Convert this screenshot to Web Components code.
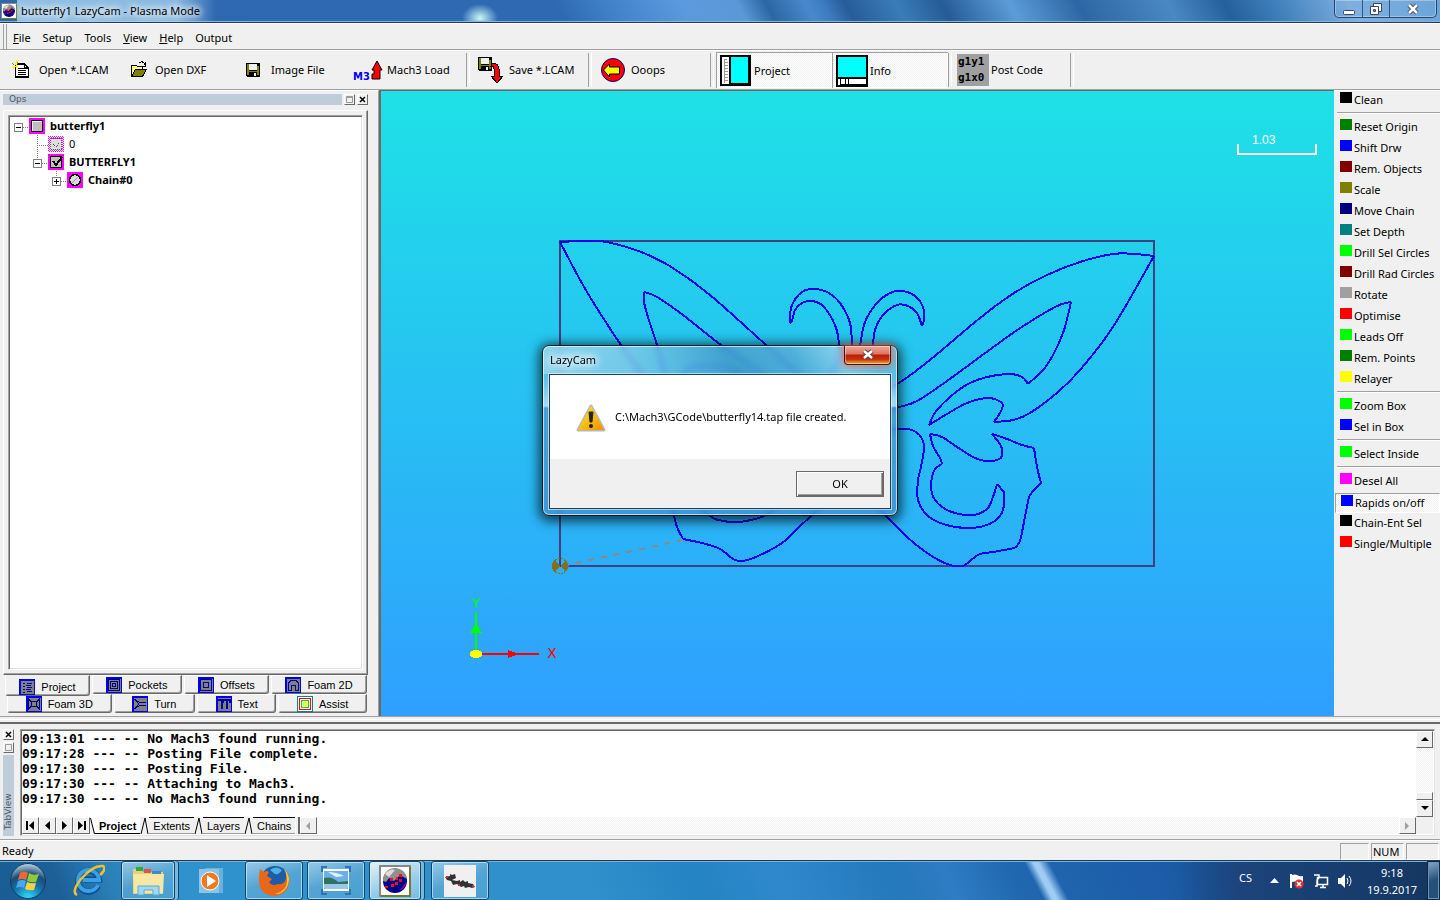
<!DOCTYPE html>
<html lang="en">
<head>
<meta charset="utf-8">
<title>butterfly1 LazyCam - Plasma Mode</title>
<style>
    :root {
        --face: #f0f0f0;
        --light: #ffffff;
        --soft: #e3e3e3;
        --shade: #a0a0a0;
        --dark: #696969;
        --dither: repeating-conic-gradient(#ffffff 0 25%, #f0f0f0 0 50%) 0 0 / 2px 2px;
        --ui-font: "Noto Sans", "Open Sans", sans-serif;
        --small-font: "Liberation Sans", Arial, sans-serif;
    }
    html, body {
        margin: 0;
        height: 100%;
    }
    body {
        font: 11px/16px var(--ui-font);
        color: #000;
        background: var(--face);
        overflow: hidden;
    }
</style>
</head>
<body>
<lazy-cam></lazy-cam>

<script>
const BASE = `
    * { box-sizing: border-box; }
    button {
        font: inherit;
        color: inherit;
        margin: 0;
        padding: 0;
        border: 0;
        background: none;
        text-align: left;
    }
    svg { display: block; flex: none; }
`;

/**
 * @param {HTMLElement} element
 * @param {string} css
 * @param {string} html
 */
function render(element, css, html) {
    element.attachShadow({ mode: "open" });
    element.shadowRoot.innerHTML = `<style>${BASE}${css}</style>${html}`;
}

const APP_ICON = `
    <rect width="32" height="32" fill="#fff"/>
    <path d="M0 0h32v2H2v30H0z" fill="#888"/>
    <path d="M30 2h2v30H2v-2h28z" fill="#7a7a20"/>
    <circle cx="16" cy="16" r="12" fill="#00008c"/>
    <path d="M4 16a12 12 0 0 1 24-2l-7-4-6 6-5-3-3 4z" fill="#909090"/>
    <path d="M6 9q5-6 10-4l-6 7z" fill="#ddd"/>
    <path d="M20 26q7-3 7-9l-4 6z" fill="#a000a0"/>
    <path d="M11 13h3v3h-3zM16 17h3v3h-3zM20 9h3v3h-3zM12 19h3v3h-3zM20 14h3v3h-3zM17 12h2v3h-2zM6 21h3v2H6z" fill="#f01010"/>`;

const ICONS = {
    open: `<svg width="32" height="32" shape-rendering="crispEdges">
        <path d="M15.500 10.500h9l4 4v9h-13z M24.500 10.500v4h4" transform="translate(-5 -.5)" fill="#fff" stroke="#000" stroke-width="1.500"/>
        <path d="M13 14h6M13 16h8M13 18h8M13 20h8" stroke="#000"/>
        <path d="M8 7l5 5M14 6l-4 5M7 12h6M11 6v8M8 15l2-3" stroke="#ff0" stroke-width="1"/>
        <path d="M7 9l2 2M13 8l-1 2" stroke="#777"/></svg>`,
    folder: `<svg width="32" height="32" shape-rendering="crispEdges">
        <path d="M10.500 22.500v-11h5l1 1h5v3" fill="#ff8" stroke="#000"/>
        <path d="M10.500 22.500l4-7h11l-4 7z" fill="#808000" stroke="#000"/>
        <path d="M18 9q4-3 6 2M24 8v4h-4" fill="none" stroke="#000"/></svg>`,
    floppy: `<svg width="32" height="32" shape-rendering="crispEdges">
        <path d="M9 9h14v14H10l-1-1z" fill="#000"/><path d="M10 10h2v11h-2zM20 12h2v9h-2zM10 17h12v1H10z" fill="#808000"/>
        <rect x="12" y="10" width="8" height="6" fill="#f0f0f0"/><rect x="17" y="19" width="2" height="3" fill="#f0f0f0"/></svg>`,
    mach: `<svg width="32" height="32">
        <text x="0" y="26" font-family="DejaVu Sans" font-weight="bold" font-size="10" fill="#0000f0">M3</text>
        <path d="M24 7l5 9h-2v9h-8v-5h2v-4h-2z" fill="#f00" stroke="#000"/></svg>`,
    save: `<svg width="32" height="32" shape-rendering="crispEdges">
        <path d="M3 3h14v14H4l-1-1z" fill="#000"/><path d="M4 4h2v11H4zM14 6h2v9h-2zM4 11h12v1H4z" fill="#808000"/>
        <rect x="6" y="4" width="8" height="6" fill="#f0f0f0"/><rect x="11" y="13" width="2" height="3" fill="#f0f0f0"/>
        <path d="M17 10q6-2 7 5v7h4l-6 7-6-7h3v-7q0-3-3-3z" fill="#f00" stroke="#000"/></svg>`,
    undo: `<svg width="32" height="32"><circle cx="16" cy="16" r="11.500" fill="#f00" stroke="#000080"/>
        <path d="M6.500 16l6-6v3h10v7h-10v3z" fill="#ff0" stroke="#000"/></svg>`,
    project: `<svg width="32" height="32" shape-rendering="crispEdges">
        <path d="M1 1h29v29H1z" fill="#fff" stroke="#000" stroke-width="2"/><path d="M10 1h19v28H10z" fill="#0ff" stroke="#000" stroke-width="2"/>
        <path d="M4.500 4v24M4 4.500h3M5 7.500h3M5 10.500h3M5 13.500h3M5 16.500h3M5 19.500h3M5 22.500h3M5 25.500h3" stroke="#999"/></svg>`,
    info: `<svg width="32" height="32" shape-rendering="crispEdges">
        <path d="M1 1h30v30H1z" fill="#fff" stroke="#000" stroke-width="2"/><path d="M1 1h30v22H1z" fill="#0ff" stroke="#000" stroke-width="2"/>
        <path d="M4.500 24v6M9.500 24v6M12.500 24v6M4 29.500h26" stroke="#000"/></svg>`,
    post: `<svg width="32" height="32"><rect width="32" height="32" fill="#a0a0a0"/>
        <text font-family="DejaVu Sans Mono" font-weight="bold" font-size="11"><tspan x="1" y="11">g1y1</tspan><tspan x="1" y="27">g1x0</tspan></text></svg>`
};

class ToolButton extends HTMLElement {
    constructor() {
        super();
        render(this, `
            :host { display: block; flex: none; width: 116px; }
            button {
                display: flex;
                align-items: center;
                gap: 2px;
                width: 100%;
                height: 100%;
                padding: 0 3px;
                border: 0 solid var(--shade);
                white-space: nowrap;
                font-size: 11px;
            }
            :host([pressed]) button {
                padding: 1px 3px 0;
                border-width: 1px 0 0 1px;
                box-shadow: inset -1px -1px var(--light);
                background: var(--dither);
            }`,
            `<button type="button">${ICONS[this.getAttribute("icon")]}<slot></slot></button>`);
    }
}

class MainTools extends HTMLElement {
    constructor() {
        super();
        render(this, `
            :host {
                display: flex;
                height: 40px;
                padding: 1px 0 1px 2px;
                border-top: 1px solid var(--light);
                border-bottom: 1px solid var(--shade);
                background: var(--face);
            }
            i { flex: none; width: 6px; padding: 1px 0; }
            i::before {
                content: "";
                display: block;
                height: 100%;
                width: 2px;
                border-left: 1px solid var(--shade);
                border-right: 1px solid var(--light);
            }`, `
            <tool-button icon="open">Open *.LCAM</tool-button>
            <tool-button icon="folder">Open DXF</tool-button>
            <tool-button icon="floppy">Image File</tool-button>
            <tool-button icon="mach">Mach3 Load</tool-button><i></i>
            <tool-button icon="save">Save *.LCAM</tool-button><i></i>
            <tool-button icon="undo">Ooops</tool-button><i></i>
            <tool-button icon="project" pressed>Project</tool-button>
            <tool-button icon="info" pressed>Info</tool-button><i></i>
            <tool-button icon="post">Post Code</tool-button><i></i>`);
    }
}

class TitleBar extends HTMLElement {
    constructor() {
        super();
        render(this, `
            :host {
                display: flex;
                align-items: flex-start;
                height: 23px;
                padding: 0 3px 0 1px;
                border-bottom: 1px solid #1c3c66;
                box-shadow: inset 0 -1px #8fb0d8;
                background:
                    radial-gradient(ellipse 18px 14px at 480px 18px, #c8f8f8, #a0e0f000),
                    linear-gradient(62deg, #2d68b0 0, #2f69b2 500px, #3f7fc6 540px, #5c9ade 610px, #5a98d8 660px, #2c66a4 685px,
                        #4a88cc 720px, #3c7cc0 735px, #265c9a 755px, #3a7cb8 800px, #255c98 840px, #5c9cd8 900px, #2d66a4 960px, #4a88c4 1040px, #24609c 1090px, #3c7cb8 1130px, #7db0e0 1200px, #6ca4d8 1280px);
            }
            svg { margin-top: 3px; }
            h1 {
                margin: 0;
                padding: 2px 16px 2px 4px;
                font-size: 11px;
                line-height: 18px;
                font-weight: normal;
                background: linear-gradient(to right, #a8d4f0d0, #a8d4f0c0 80%, #a0ccec00);
                text-shadow: 0 0 6px #fff, 0 0 9px #fff, 0 0 9px #fff;
            }
            div {
                display: flex;
                margin-left: auto;
                border: 1px solid #24466e;
                border-top: 0;
                border-radius: 0 0 5px 5px;
                box-shadow: inset 0 0 0 1px #ffffff50;
            }
            button { width: 27px; height: 17px; display: grid; place-items: center; }
            button + button { border-left: 1px solid #34567e; }
            button:last-child { width: 47px; }
            button svg { margin: 0; }`, `
            <svg width="16" height="16" viewBox="0 0 32 32">${APP_ICON}</svg>
            <h1>butterfly1 LazyCam - Plasma Mode</h1>
            <div>
                <button type="button" aria-label="Minimize"><svg width="12" height="12"><rect x=".5" y="7.500" width="11" height="4" rx="1" fill="#fff" stroke="#445"/></svg></button>
                <button type="button" aria-label="Restore"><svg width="12" height="12"><path d="M3.500.5h8v8h-8z" fill="#fff" stroke="#445"/><path d="M.5 3.500h8v8h-8z" fill="#fff" stroke="#445"/><path d="M3.500 6.500h2v2h-2z" fill="#69b" stroke="#445"/></svg></button>
                <button type="button" aria-label="Close"><svg width="12" height="12"><path d="M2 2l8 8M10 2l-8 8" stroke="#445" stroke-width="4.500"/><path d="M2 2l8 8M10 2l-8 8" stroke="#fff" stroke-width="2.500"/></svg></button>
            </div>`);
    }
}

class MenuBar extends HTMLElement {
    constructor() {
        super();
        render(this, `
            :host {
                display: flex;
                align-items: center;
                height: 27px;
                padding: 3px 0 0 3px;
                border-top: 1px solid var(--light);
                border-bottom: 1px solid var(--shade);
                background: var(--face);
            }
            i {
                align-self: stretch;
                width: 4px;
                margin: -3px 6px 0 0;
                border: 1px solid var(--shade);
                border-width: 0 1px;
            }
            nav { display: flex; gap: 12px; }`, `
            <i></i>
            <nav>
                <button type="button"><u>F</u>ile</button>
                <button type="button">Setup</button>
                <button type="button">Tools</button>
                <button type="button"><u>V</u>iew</button>
                <button type="button"><u>H</u>elp</button>
                <button type="button">Output</button>
            </nav>`);
    }
}

const CHECKS = {
    box: `<rect width="16" height="16" fill="#f0f"/><path d="M2.500 2.500h11v11h-11z" fill="#c0c0c0" stroke="#000"/><path d="M3 13V3h10" fill="none" stroke="#eee"/>`,
    dim: `<rect width="16" height="16" fill="url(#dots)"/><path d="M2.500 2.500h11v11h-11z" fill="#ddd" stroke="#555" stroke-dasharray="1 1"/><path d="M5 8l3 3 5-6" fill="none" stroke="#555" stroke-dasharray="1 1"/>`,
    tick: `<rect width="16" height="16" fill="#f0f"/><path d="M2.500 2.500h11v11h-11z" fill="#c0c0c0" stroke="#000"/><path d="M5 7l3 4 6-8" fill="none" stroke="#000" stroke-width="2"/>`,
    chain: `<rect width="16" height="16" fill="#f0f"/><circle cx="8" cy="8" r="5.500" fill="#ddd" stroke="#000" stroke-width="1.500"/><path d="M5 11l6-6" stroke="#999"/>`
};

class TreeRow extends HTMLElement {
    constructor() {
        super();
        const level = Number(this.getAttribute("level"));
        const toggle = this.getAttribute("toggle");
        const left = level * 19;
        let guide = "";
        if (level) {
            guide += `<path d="M${left + 4}.5 0v5" stroke="#808080" stroke-dasharray="1 1"/>`;
        }
        if (toggle) {
            guide += `<path d="M${left + 9} 10.500h6" stroke="#808080" stroke-dasharray="1 1"/>
                <path d="M${left}.5 6.500h8v8h-8z" fill="#fff" stroke="#808080"/>
                <path d="M${left + 2} 10.500h5${toggle === "plus" ? "m-2.500 -2.500v5" : ""}" stroke="#000"/>`;
        } else {
            guide += `<path d="M${left + 4}.5 0v18M${left + 4} 10.500h11" stroke="#808080" stroke-dasharray="1 1"/>`;
        }
        render(this, `
            :host { display: flex; align-items: center; height: 18px; line-height: 18px; }
            :host([bold]) { font-weight: bold; }
            .icon { margin-right: 5px; }`, `
            <svg width="${left + 15}" height="18" shape-rendering="crispEdges">${guide}</svg>
            <svg class="icon" width="16" height="16" shape-rendering="crispEdges">
                <defs><pattern id="dots" width="2" height="2" patternUnits="userSpaceOnUse"><path d="M0 0h1v1H0zM1 1h1v1H1z" fill="#f0f"/></pattern></defs>
                ${CHECKS[this.getAttribute("icon")]}
            </svg>
            <slot></slot>`);
    }
}

const BLUE = `<rect width="16" height="16" fill="#0000e8"/><rect x="2" y="2" width="13" height="13" fill="#808080"/>`;
const TAB_ICONS = {
    project: `${BLUE}<path d="M4 4.500h2M4 7.500h2M4 10.500h2M4 13.500h2M8 4.500h5M7 6.500h5M8 8.500h5M7 10.500h5M8 12.500h5" stroke="#0000a0"/>`,
    pockets: `${BLUE}<path d="M2.500 2.500h11v11h-11zM4.500 4.500h7v7h-7zM6.500 6.500h3v3h-3z" fill="none" stroke="#000080"/>`,
    offsets: `${BLUE}<path d="M2.500 2.500h11v11h-11zM5.500 5.500h5v5h-5z" fill="none" stroke="#0000a0"/>`,
    foam2d: `${BLUE}<path d="M3.500 13.500V6l3-3h4l3 3v7.500h-3V9q-2-2-4 0v4.500z" fill="none" stroke="#0000a0"/>`,
    foam3d: `${BLUE}<path d="M2 2.500l3 3h6l3-3M2 13.500l3-3h6l3 3M5.500 5v6M10.500 5v6M2.500 3v10M13.500 3v10" fill="none" stroke="#000080"/>`,
    turn: `${BLUE}<path d="M2 3.500l6 3h6M2 12.500l6-3h6M3 3l4 5-4 5" fill="none" stroke="#000080"/>`,
    text: `${BLUE}<path d="M2 4h7M5.500 4v9M7 7V4h7v3M10.500 4v9" fill="none" stroke="#0000a0" stroke-width="2"/>`,
    assist: `<rect width="16" height="16" fill="#088"/><rect x="1" y="1" width="14" height="14" fill="#fff"/><path d="M2.500 2.500h11v11h-11z" fill="none" stroke="#f00"/><path d="M4.500 4.500h7v7h-7z" fill="#fff" stroke="#0d0"/><rect x="6" y="6" width="4" height="4" fill="#ff0"/>`
};

class OpsTab extends HTMLElement {
    constructor() {
        super();
        render(this, `
            :host { display: block; flex: 1 1 auto; }
            button {
                display: flex;
                align-items: center;
                justify-content: center;
                gap: 6px;
                width: 100%;
                height: 19px;
                font: 11px/16px var(--small-font);
                border: 1px solid;
                border-color: var(--light) var(--dark) var(--dark) var(--light);
                border-radius: 0 0 3px 3px;
                box-shadow: inset -1px -1px var(--shade);
            }
            :host([active]) button {
                height: 21px;
                padding-top: 3px;
                border-top-color: var(--face);
                background: var(--face);
            }`,
            `<button type="button" role="tab"><svg width="16" height="16" shape-rendering="crispEdges">${TAB_ICONS[this.getAttribute("icon")]}</svg><slot></slot></button>`);
    }
}

class OpsPanel extends HTMLElement {
    constructor() {
        super();
        render(this, `
            :host {
                display: flex;
                flex-direction: column;
                flex: none;
                width: 379px;
                padding: 3px 10px 3px 3px;
                border-top: 1px solid var(--light);
                border-right: 1px solid var(--shade);
                background: var(--face);
            }
            header { display: flex; gap: 2px; align-items: center; height: 11px; }
            h2 {
                flex: 1;
                margin: 0;
                padding-left: 6px;
                font: 9px/11px "DejaVu Sans", sans-serif;
                color: #505860;
                background: #bfcddb;
            }
            header button {
                width: 11px;
                height: 11px;
                display: grid;
                place-items: center;
                border: 1px solid;
                border-color: var(--light) var(--dark) var(--dark) var(--light);
            }
            .frame {
                display: flex;
                flex: 1;
                margin-top: 5px;
                padding: 4px;
                border: 1px solid;
                border-color: var(--light) var(--dark) var(--dark) var(--light);
                box-shadow: inset -1px -1px var(--shade);
            }
            .tree {
                flex: 1;
                padding: 1px 0 0 5px;
                background: #fff;
                border: 1px solid;
                border-color: var(--shade) var(--light) var(--light) var(--shade);
                box-shadow: inset 1px 1px var(--dark), inset -1px -1px var(--soft);
            }
            .tabs { display: flex; gap: 2px; padding: 0 1px 0 2px; height: 19px; }
            .tabs ops-tab[active] { z-index: 1; }
            .tabs + .tabs { padding-left: 4px; }`, `
            <header>
                <h2>Ops</h2>
                <button type="button" aria-label="Expand"><svg width="7" height="7"><path d="M.5.5h6v6h-6zM0 1.500h6" fill="none" stroke="#999"/></svg></button>
                <button type="button" aria-label="Close"><svg width="7" height="7"><path d="M1 1l5 5M6 1l-5 5" stroke="#000" stroke-width="1.500"/></svg></button>
            </header>
            <div class="frame"><div class="tree">
                <tree-row level="0" toggle="minus" icon="box" bold>butterfly1</tree-row>
                <tree-row level="1" icon="dim">0</tree-row>
                <tree-row level="1" toggle="minus" icon="tick" bold>BUTTERFLY1</tree-row>
                <tree-row level="2" toggle="plus" icon="chain" bold>Chain#0</tree-row>
            </div></div>
            <div class="tabs" role="tablist">
                <ops-tab icon="project" active>Project</ops-tab>
                <ops-tab icon="pockets">Pockets</ops-tab>
                <ops-tab icon="offsets">Offsets</ops-tab>
                <ops-tab icon="foam2d">Foam 2D</ops-tab>
            </div>
            <div class="tabs" role="tablist">
                <ops-tab icon="foam3d">Foam 3D</ops-tab>
                <ops-tab icon="turn">Turn</ops-tab>
                <ops-tab icon="text">Text</ops-tab>
                <ops-tab icon="assist">Assist</ops-tab>
            </div>`);
    }
}

// Each inner list is one smooth run; runs meet at sharp corners.
const CHAINS = [
    [[766, 345], [710, 295], [673, 268], [646, 254], [623, 246], [600, 241], [580, 241], [560, 242]],
    [[560, 242], [587, 292], [621, 345], [650, 385]],
    [[766, 345], [800, 376]],
    [[665, 375], [657, 345], [648, 317], [644, 302], [644, 292]],
    [[644, 292], [657, 297], [683, 315], [721, 345], [768, 378]],
    [[680, 380], [690, 368], [710, 366], [735, 370], [760, 380]],
    [[829, 378], [838, 362], [839, 344], [835, 325], [823, 306], [812, 301], [802, 303], [795, 310], [792, 321], [790, 321], [792, 305], [802, 292], [813, 289], [827, 292], [840, 303], [850, 323], [852, 346]],
    [[860, 346], [865, 322], [877, 303], [890, 293], [902, 291], [915, 296], [923, 307], [924, 319], [922, 326]],
    [[922, 326], [917, 313], [908, 306], [897, 305], [883, 315], [875, 330], [873, 346]],
    [[880, 392], [899, 383], [930, 360], [980, 318], [1014, 293], [1047, 275], [1080, 262], [1113, 254], [1135, 254], [1154, 256]],
    [[1154, 256], [1113, 327], [1080, 370], [1058, 392], [1030, 413], [1013, 420], [994, 422]],
    [[994, 422], [1001, 411], [1002, 403], [988, 398], [967, 403], [947, 414], [929, 425]],
    [[929, 425], [937, 410], [960, 389], [980, 379], [1008, 374], [1022, 377], [1028, 384]],
    [[1028, 384], [1047, 365], [1063, 333], [1071, 302]],
    [[1071, 302], [1055, 307], [1013, 333], [947, 381], [917, 401], [899, 407], [880, 412]],
    [[880, 432], [899, 429], [912, 430], [921, 437], [924, 448], [921, 467], [918, 480], [918, 500], [927, 515], [943, 524], [966, 528], [987, 525], [1000, 516], [1004, 505], [1004, 492]],
    [[1004, 492], [997, 484]],
    [[997, 484], [993, 497], [988, 508], [978, 514], [965, 515], [947, 510], [935, 500], [931, 488], [932, 477], [935, 469], [942, 464]],
    [[942, 464], [940, 458], [933, 446], [930, 434]],
    [[930, 434], [942, 437], [957, 447], [973, 457], [985, 461], [997, 460], [1002, 456], [1001, 446], [992, 434]],
    [[992, 434], [1007, 439], [1022, 445], [1034, 448]],
    [[1034, 448], [1037, 467], [1041, 483]],
    [[1041, 483], [1030, 495], [1027, 507], [1023, 527], [1020, 541], [1015, 548]],
    [[1015, 548], [993, 552], [980, 554], [971, 560], [963, 566], [950, 565], [930, 555], [907, 537], [886, 516], [870, 498]],
    [[672, 500], [674, 515], [677, 527], [683, 539]],
    [[683, 539], [702, 543], [718, 548], [727, 554], [733, 559], [742, 561], [758, 556], [782, 543], [798, 528], [812, 515], [830, 498]],
    [[700, 508], [709, 515], [718, 520], [738, 522], [755, 519], [766, 515], [776, 508]]
];

/**
 * @param {number[][]} points
 * @returns {string} path data of a Catmull-Rom curve through the points
 */
function smoothPath(points) {
    let d = `M${points[0]}`;
    for (let i = 0; i < points.length - 1; i++) {
        const a = points[i - 1] || points[i];
        const b = points[i];
        const c = points[i + 1];
        const e = points[i + 2] || c;
        d += `C${b[0] + (c[0] - a[0]) / 6} ${b[1] + (c[1] - a[1]) / 6} ${c[0] - (e[0] - b[0]) / 6} ${c[1] - (e[1] - b[1]) / 6} ${c}`;
    }
    return d;
}

class DrawingView extends HTMLElement {
    constructor() {
        super();
        render(this, `
            :host {
                display: block;
                flex: 1;
                min-width: 0;
                min-height: 0;
                border-top: 1px solid var(--dark);
                border-left: 2px solid var(--dark);
                background: linear-gradient(#1ee1e6, #309fff);
            }
            svg { width: 100%; height: 100%; }
            text { font-family: "DejaVu Sans", sans-serif; }
            .scale { font-family: var(--small-font); }`, `
            <svg viewBox="381 91 953 625" role="img" aria-label="butterfly1 drawing">
                <g shape-rendering="crispEdges" fill="none" stroke-width="2">
                    <path d="M560 241h594v325H560z" stroke="#404080"/>
                    <path d="${CHAINS.map(smoothPath).join("")}" stroke="#0000f0"/>
                    <path d="M683 540L563 566" stroke="#888" stroke-dasharray="6 7"/>
                    <path d="M1238 144v10h78v-10" stroke="#fff"/>
                </g>
                <g shape-rendering="crispEdges">
                    <circle cx="560" cy="566" r="7.500" fill="none" stroke="#807020" stroke-dasharray="2 1"/>
                    <path d="M560 566l-6-6q-4 6 0 12zM560 566l6-6q4 6 0 12z" fill="#807020"/>
                    <path d="M476 653v-41" stroke="#0f0" stroke-width="2"/><path d="M476 623l6 10h-12z" fill="#0f0"/>
                    <path d="M476 654h63" stroke="#f00" stroke-width="2"/><path d="M508 650l11 4-11 4z" fill="#f00"/>
                    <ellipse cx="476" cy="654" rx="6" ry="4" fill="#ff0"/>
                </g>
                <text x="476" y="608" text-anchor="middle" font-size="14" fill="#0f0">Y</text>
                <text x="552" y="658" text-anchor="middle" font-size="14" fill="#f00">X</text>
                <text class="scale" x="1252" y="144" font-size="12" fill="#fff">1.03</text>
            </svg>`);
    }
}

class OpItem extends HTMLElement {
    constructor() {
        super();
        render(this, `
            :host { display: block; }
            button {
                display: flex;
                gap: 2px;
                width: 100%;
                height: 21px;
                padding: 1px 0 0 5px;
                white-space: nowrap;
            }
            i { width: 12px; height: 11px; background: ${this.getAttribute("color")}; }
            :host([pressed]) button {
                height: 20px;
                margin-bottom: 1px;
                border: 1px solid;
                border-color: var(--shade) var(--light) var(--light) var(--shade);
                background: var(--dither);
            }`,
            `<button type="button"><i></i><slot></slot></button>`);
    }
}

class OpsBar extends HTMLElement {
    constructor() {
        super();
        const groups = [
            [["#000", "Clean"]],
            [["#008000", "Reset Origin"], ["#00f", "Shift Drw"], ["#800000", "Rem. Objects"], ["#808000", "Scale"],
                ["#000080", "Move Chain"], ["#008080", "Set Depth"], ["#0f0", "Drill Sel Circles"], ["#800000", "Drill Rad Circles"],
                ["#a0a0a0", "Rotate"], ["#f00", "Optimise"], ["#0f0", "Leads Off"], ["#008000", "Rem. Points"], ["#ff0", "Relayer"]],
            [["#0f0", "Zoom Box"], ["#00f", "Sel in Box"]],
            [["#0f0", "Select Inside"]],
            [["#f0f", "Desel All"], ["#00f", "Rapids on/off", "pressed"], ["#000", "Chain-Ent Sel"], ["#f00", "Single/Multiple"]]
        ];
        const html = groups.map((group) => group.map(([color, label, state]) =>
            `<op-item color="${color}" ${state || ""}>${label}</op-item>`).join("")).join("<hr>");
        render(this, `
            :host {
                display: block;
                flex: none;
                width: 106px;
                padding: 0 0 0 1px;
                border-top: 1px solid var(--light);
                background: var(--face);
            }
            hr {
                height: 2px;
                margin: 0 0 4px 2px;
                border: 0;
                border-top: 1px solid var(--shade);
                border-bottom: 1px solid var(--light);
            }`, html);
    }
}

class LogPanel extends HTMLElement {
    constructor() {
        super();
        const lines = [
            "09:13:01 --- -- No Mach3 found running.",
            "09:17:28 --- -- Posting File complete.",
            "09:17:30 --- -- Posting File.",
            "09:17:30 --- -- Attaching to Mach3.",
            "09:17:30 --- -- No Mach3 found running."
        ];
        const slash = `<svg width="9" height="17"><path d="M0 17L4 1H8L9 17z" fill="#f0f0f0"/><path d="M1 17L5 1M5 1l3 16" fill="none" stroke="#000"/></svg>`;
        render(this, `
            :host {
                display: flex;
                flex: none;
                gap: 6px;
                height: 118px;
                padding: 5px 5px 3px 3px;
                border-top: 2px solid var(--dark);
                border-bottom: 1px solid var(--shade);
                background: var(--face);
            }
            .grip { display: flex; flex-direction: column; gap: 2px; width: 11px; }
            .grip button { height: 11px; }
            button {
                display: grid;
                place-items: center;
                border: 1px solid;
                border-color: var(--light) var(--dark) var(--dark) var(--light);
                background: var(--face);
            }
            .grip span {
                flex: 1;
                writing-mode: vertical-rl;
                transform: rotate(180deg);
                padding-top: 6px;
                font: 9px/11px "DejaVu Sans", sans-serif;
                color: #505860;
                background: #bfcddb;
            }
            .box {
                flex: 1;
                min-width: 0;
                display: grid;
                grid-template: 1fr 17px / 1fr 17px;
                padding: 1px;
                background: #fff;
                border: 1px solid;
                border-color: var(--shade) var(--soft) var(--soft) var(--shade);
                box-shadow: inset 1px 1px var(--dark);
            }
            ol {
                margin: 0;
                padding: 0;
                list-style: none;
                font: bold 13px/15px "DejaVu Sans Mono", monospace;
                white-space: pre;
                overflow: hidden;
            }
            .scroll { display: flex; flex-direction: column; background: var(--dither); }
            .scroll button { height: 17px; }
            .scroll .thumb { height: 8px; margin-top: auto; }
            .bottom { display: flex; background: var(--dither); font: 11px/16px var(--small-font); }
            .bottom > button { flex: none; width: 17px; }
            .tabs { display: flex; flex: none; background: var(--face); }
            .tabs button {
                padding: 0 4px;
                border-width: 1px 0;
                border-color: #000 transparent var(--shade);
            }
            .tabs .active { font-weight: bold; background: #fff; border-color: #fff transparent #000; }
            .split { width: 5px; border-left: 1px solid var(--light); border-right: 2px solid var(--dark); background: var(--face); }
            .end { margin-left: auto; }
            .corner { background: var(--face); }`, `
            <div class="grip">
                <button type="button" aria-label="Close"><svg width="7" height="7"><path d="M1 1l5 5M6 1l-5 5" stroke="#000" stroke-width="1.500"/></svg></button>
                <button type="button" aria-label="Expand"><svg width="7" height="7"><path d="M.5.5h6v6h-6z" fill="none" stroke="#999"/></svg></button>
                <span>TabView</span>
            </div>
            <div class="box">
                <ol>${lines.map((line) => `<li>${line}</li>`).join("")}</ol>
                <div class="scroll">
                    <button type="button" aria-label="Up"><svg width="8" height="5"><path d="M4 0l4 4H0z"/></svg></button>
                    <button type="button" class="thumb" aria-label="Scroll"></button>
                    <button type="button" aria-label="Down"><svg width="8" height="5"><path d="M0 0h8L4 4z"/></svg></button>
                </div>
                <div class="bottom">
                    <button type="button" aria-label="First"><svg width="9" height="9"><path d="M0 0h2v9H0zM8 0v9L3 4.500z"/></svg></button>
                    <button type="button" aria-label="Previous"><svg width="9" height="9"><path d="M7 0v9L2 4.500z"/></svg></button>
                    <button type="button" aria-label="Next"><svg width="9" height="9"><path d="M2 0v9l5-4.500z"/></svg></button>
                    <button type="button" aria-label="Last"><svg width="9" height="9"><path d="M7 0h2v9H7zM1 0v9l5-4.500z"/></svg></button>
                    <div class="tabs">
                        <svg width="5" height="17"><path d="M0 0h5v17z" fill="#fff"/><path d="M.5 1l4 16" stroke="#000"/></svg>
                        <button type="button" class="active">Project</button>${slash}
                        <button type="button">Extents</button>${slash}
                        <button type="button">Layers</button>${slash}
                        <button type="button">Chains</button>
                    </div>
                    <div class="split"></div>
                    <button type="button" aria-label="Left"><svg width="5" height="8"><path d="M4 0v8L0 4z" fill="#a0a0a0"/></svg></button>
                    <button type="button" class="end" aria-label="Right"><svg width="5" height="8"><path d="M0 0v8l4-4z" fill="#a0a0a0"/></svg></button>
                </div>
                <div class="corner"></div>
            </div>`);
    }
}

class StatusBar extends HTMLElement {
    constructor() {
        super();
        render(this, `
            :host {
                display: flex;
                flex: none;
                align-items: center;
                gap: 2px;
                height: 20px;
                padding: 1px 1px 0 2px;
                border-top: 1px solid var(--light);
                background: var(--face);
            }
            span { margin-right: auto; }
            b {
                width: 33px;
                height: 17px;
                padding: 0 1px;
                font-weight: normal;
                border: 1px solid;
                border-color: var(--shade) var(--light) var(--light) var(--shade);
            }
            b:first-of-type { width: 29px; }`,
            `<span>Ready</span><b></b><b>NUM</b><b></b>`);
    }
}

const TASK_ICONS = {
    ie: `<svg width="34" height="34"><path d="M27 22A10.500 10.500 0 1 1 28 15.500H12" fill="none" stroke="#0c4c94" stroke-width="6"/><path d="M27 21A10.500 10.500 0 1 1 28 16H12" fill="none" stroke="#38a0e4" stroke-width="4"/>
        <path d="M6 31q-6-3 4-16Q22 1 32 2q4 3-3 9" fill="none" stroke="#f0c030" stroke-width="2.500"/></svg>`,
    explorer: `<svg width="34" height="34"><path d="M2 5h8l2 3h20v22H2z" fill="#e8cf78"/><path d="M5 3h7v4H5z" fill="#3a3"/><path d="M13 5h7v4h-7z" fill="#d54"/><path d="M21 7h9v4h-9z" fill="#48c"/><path d="M2 10h31l-1 19H3z" fill="#f6e8a4"/>
        <path d="M7 31v-9h21v9h-6v-5h-9v5z" fill="#9ed8f4" stroke="#5ba8d4"/></svg>`,
    media: `<svg width="34" height="34"><path d="M10 4h18v25H10z" fill="#6ab0dc"/><path d="M4 5h20v24H4z" fill="#8cc4e8"/><circle cx="15" cy="17" r="9" fill="#f07820" stroke="#fff"/><path d="M12 11l9 6-9 6z" fill="#fff"/></svg>`,
    firefox: `<svg width="34" height="34"><circle cx="18" cy="16" r="14" fill="#1c5ca8"/><path d="M13 6q6-5 12 0-3 5-7 4z" fill="#4cb4e4"/>
        <path d="M3 5l4 3q3-2 5 0l-2 4 5 3-3 3q3 5 9 2 7 1 8-6 1-6-3-9 7 4 6 14-2 12-15 13Q3 31 2 18 2 9 3 5z" fill="#e86818"/><path d="M27 5q8 8 3 18-5 8-12 7 12-3 12-13 0-7-3-12z" fill="#ffc830"/></svg>`,
    photo: `<svg width="34" height="34"><path d="M4 5h26v22H4z" fill="#fff"/><path d="M5 7h24v18H5z" fill="#6cb0e8"/><path d="M9 8q8 0 16 4l-8 1z" fill="#e0f0fc"/><path d="M5 14q8-2 14 4l10-1v4H5z" fill="#2c7460"/><path d="M5 20h24v5H5z" fill="#98c8e4"/>
        <path d="M3 8V3h5M26 3h5v5M31 25v5h-5M8 30H3v-5" fill="none" stroke="#2c74b8" stroke-width="2"/></svg>`,
    lazycam: `<svg width="32" height="32">${APP_ICON}</svg>`,
    sleigh: `<svg width="32" height="32"><path d="M0 0h32v32H0z" fill="#f0f0f0"/><path d="M1 12l5-1v-2l2 1 3-1 1 4-4 2 5 1 3-1v2l3-2 2 2 3-1v2l5 1 2 3-3 1-3-1-4 1-1-2-3 1-4-3-4 1-2-4-4-1z" fill="#333"/><path d="M2 11h2v2H2zM14 19h2v2h-2zM28 20h2v2h-2z" fill="#e22"/></svg>`
};

class TaskItem extends HTMLElement {
    constructor() {
        super();
        render(this, `
            :host { display: block; flex: none; width: 58px; }
            button {
                display: grid;
                place-items: center;
                width: 100%;
                height: 39px;
                border: 1px solid transparent;
                border-radius: 3px;
            }
            :host([running]) button, :host([stacked]) button {
                border-color: #14456a;
                background: linear-gradient(160deg, #b8dcf0c0, #68b0d8a0 50%, #58acd890);
                box-shadow: inset 0 0 0 1px #d8f0ffa0;
            }
            :host([stacked]) button {
                width: 54px;
                box-shadow: inset 0 0 0 1px #d8f0ffa0, 3px 0 #78b8dc, 4px 0 #14456a;
            }
            :host([active]) button {
                width: 52px;
                background: linear-gradient(160deg, #f0f8fcf0, #b8e0f4c0 60%, #90d0f0b0);
            }`,
            `<button type="button" aria-label="${this.getAttribute("icon")}">${TASK_ICONS[this.getAttribute("icon")]}</button>`);
    }
}

class TaskBar extends HTMLElement {
    constructor() {
        super();
        render(this, `
            :host {
                display: flex;
                flex: none;
                align-items: center;
                height: 40px;
                color: #fff;
                border-top: 1px solid #1c3c58;
                box-shadow: inset 0 1px #78b0d8;
                background:
                    linear-gradient(to left, #143660 0, #1c447c 200px, #1c447c00 260px),
                    linear-gradient(62deg, transparent 922px, #a0ccf4 930px, #a0ccf4 934px, transparent 944px),
                    linear-gradient(70deg, #1a5c94 0, #1d6098 60px, #2a80b8 110px, #3092cc 170px, #2f90cc 560px, #2484c4 660px, #3088cc 740px, #2478bc 850px, #2f7cc4 900px, #2068b0 960px, #1c5ca8 1100px, #184c8c 1200px, #143c70 1340px);
            }
            .start { width: 55px; height: 39px; display: grid; place-items: center; }
            .apps { display: flex; gap: 4px; padding-left: 4px; }
            .tray { display: flex; align-items: center; gap: 8px; height: 100%; margin-left: auto; }
            .tray span { padding-right: 10px; margin-bottom: 5px; }
            time { text-align: center; line-height: 17px; padding: 0 2px 0 6px; }
            .desk { width: 13px; height: 39px; border: 1px solid #0c2848; background: linear-gradient(160deg, #88a8c8, #24507c 50%); box-shadow: inset 0 0 0 1px #6c90b4; }`, `
            <button type="button" class="start" aria-label="Start"><svg width="38" height="38">
                <defs><radialGradient id="orb" cx=".5" cy="1" r="1"><stop offset="0" stop-color="#30e0ff"/><stop offset=".45" stop-color="#1470a8"/><stop offset=".7" stop-color="#1c4c74"/><stop offset="1" stop-color="#c0d8e8"/></radialGradient></defs>
                <circle cx="19" cy="19" r="17.500" fill="url(#orb)" stroke="#123c5c"/>
                <path d="M11 11q4-3 8 0l-2 7q-4-2-8 0z" fill="#f06830"/><path d="M20 11q4 3 10 1l-3 8q-4 1-9-1z" fill="#90c840"/>
                <path d="M9 19q4-2 8 0l-2 7q-4-2-8 0z" fill="#48a8f0"/><path d="M18 20q4 2 9 1l-2 7q-5 1-9-1z" fill="#ffd040"/></svg></button>
            <div class="apps">
                <task-item icon="ie"></task-item>
                <task-item icon="explorer" stacked></task-item>
                <task-item icon="media"></task-item>
                <task-item icon="firefox" running></task-item>
                <task-item icon="photo" running></task-item>
                <task-item icon="lazycam" stacked active></task-item>
                <task-item icon="sleigh" running></task-item>
            </div>
            <div class="tray">
                <span>CS</span>
                <svg width="9" height="5"><path d="M4.500 0L9 5H0z" fill="#fff"/></svg>
                <svg width="18" height="16"><path d="M4 1v14" stroke="#fff" stroke-width="2"/><path d="M5 2q3-1 5 0 3 2 6 1v7q-3 1-6-1-2-1-5 0z" fill="#fff"/><circle cx="12" cy="11" r="4.500" fill="#e03030"/><path d="M10 9l4 4M14 9l-4 4" stroke="#fff" stroke-width="1.500"/></svg>
                <svg width="16" height="16"><path d="M4.500 4.500h10v7h-10zM7 14.500h6M10 12v2M1 2h5v3l-2 2v6H2" fill="none" stroke="#fff" stroke-width="1.500"/></svg>
                <svg width="16" height="16"><path d="M1 5h3l4-4v14l-4-4H1z" fill="#fff"/><path d="M10 5q2 3 0 6M12 3q4 5 0 10" fill="none" stroke="#fff"/></svg>
                <time>9:18<br>19.9.2017</time>
                <button type="button" class="desk" aria-label="Show desktop"></button>
            </div>`);
    }
}

class MessageBox extends HTMLElement {
    constructor() {
        super();
        render(this, `
            :host {
                display: flex;
                flex-direction: column;
                width: 356px;
                padding: 0 6px 6px;
                border: 1px solid #10202c;
                border-radius: 7px;
                box-shadow: inset 0 0 0 1px #ffffffa0, 0 2px 12px 3px #000000b0;
                background:
                    linear-gradient(62deg, #ffffff50 0, #ffffff20 80px, #2070a000 110px, #1878b070 170px, #1878b040 230px, #ffffff30 270px, #ffffff00 300px) 0 0 / 100% 28px no-repeat,
                    linear-gradient(#80c4e0b0 0, #70bce0b0 30px, #d0e8f4c0 60px, #5098ccb0 62px, #4490ccc0);
                backdrop-filter: blur(3px);
            }
            header { display: flex; align-items: flex-start; justify-content: space-between; height: 28px; }
            h2 {
                margin: 5px 0 0 1px;
                font-size: 11px;
                line-height: 18px;
                font-weight: normal;
                text-shadow: 0 0 6px #fff, 0 0 8px #fff, 0 0 10px #fff, 0 0 12px #fff;
            }
            header button {
                display: grid;
                place-items: center;
                width: 47px;
                height: 19px;
                border: 1px solid #401818;
                border-top: 0;
                border-radius: 0 0 4px 4px;
                background: linear-gradient(#f0a898, #e07060 45%, #b81c08 50%, #c83408 75%, #f0b040);
                box-shadow: inset 0 0 0 1px #ffffff60, 0 0 6px 2px #ff6040b0;
            }
            section { border: 1px solid #204058; background: #fff; box-shadow: 0 0 0 1px #ffffff90; }
            p { display: flex; align-items: center; gap: 8px; margin: 0; padding: 0 25px; height: 84px; }
            footer { display: flex; justify-content: flex-end; padding: 12px 6px 11px; background: var(--face); }
            footer button {
                width: 88px;
                height: 26px;
                text-align: center;
                border: 1px solid var(--dark);
                box-shadow: inset 1px 1px var(--light), inset -1px -1px var(--dark), inset -2px -2px var(--shade);
                background: var(--face);
            }`, `
            <header>
                <h2>LazyCam</h2>
                <button type="button" aria-label="Close"><svg width="12" height="11"><path d="M2 2l8 7M10 2l-8 7" stroke="#544" stroke-width="4.500"/><path d="M2 2l8 7M10 2l-8 7" stroke="#fff" stroke-width="2.500"/></svg></button>
            </header>
            <section>
                <p>
                    <svg width="32" height="30"><defs><linearGradient id="warn" x2="1" y2="1"><stop stop-color="#fff020"/><stop offset="1" stop-color="#f09000"/></linearGradient></defs>
                        <path d="M16 4L29 28H3z" fill="url(#warn)" stroke="#b8b8b8" stroke-width="3" stroke-linejoin="round"/>
                        <path d="M16 4L29 28H3z" fill="url(#warn)"/>
                        <path d="M14 10h4l-1 10h-2z" fill="#222" stroke="#222"/><circle cx="16" cy="24" r="2" fill="#222"/></svg>
                    <slot></slot>
                </p>
                <footer><button type="button" class="ok">OK</button></footer>
            </section>`);
        this.shadowRoot.querySelectorAll("button").forEach((button) => {
            button.addEventListener("click", () => this.remove());
        });
    }
}

class LazyCam extends HTMLElement {
    constructor() {
        super();
        render(this, `
            :host { display: flex; flex-direction: column; height: 100vh; }
            title-bar, menu-bar, main-tools { flex: none; }
            main { display: flex; flex: 1; min-height: 0; }
            .splitter {
                flex: none;
                height: 6px;
                border-top: 1px solid var(--shade);
                background: linear-gradient(var(--face) 2px, #fff 2px 3px, var(--face) 3px);
            }
            .modal {
                position: absolute;
                inset: 0 0 40px;
                display: grid;
                place-items: center;
            }`, `
            <title-bar></title-bar>
            <menu-bar></menu-bar>
            <main-tools></main-tools>
            <main>
                <ops-panel></ops-panel>
                <drawing-view></drawing-view>
                <ops-bar></ops-bar>
            </main>
            <div class="splitter"></div>
            <log-panel></log-panel>
            <status-bar></status-bar>
            <task-bar></task-bar>
            <div class="modal"><message-box role="dialog" aria-label="LazyCam">C:\\Mach3\\GCode\\butterfly14.tap file created.</message-box></div>`);
    }
}

// Attributes are read in the constructors, so children are defined after
// the markup of their parent exists: the page root goes first.
customElements.define("lazy-cam", LazyCam);
customElements.define("title-bar", TitleBar);
customElements.define("menu-bar", MenuBar);
customElements.define("main-tools", MainTools);
customElements.define("tool-button", ToolButton);
customElements.define("ops-panel", OpsPanel);
customElements.define("tree-row", TreeRow);
customElements.define("ops-tab", OpsTab);
customElements.define("drawing-view", DrawingView);
customElements.define("ops-bar", OpsBar);
customElements.define("op-item", OpItem);
customElements.define("log-panel", LogPanel);
customElements.define("status-bar", StatusBar);
customElements.define("task-bar", TaskBar);
customElements.define("task-item", TaskItem);
customElements.define("message-box", MessageBox);
</script>
</body>
</html>
